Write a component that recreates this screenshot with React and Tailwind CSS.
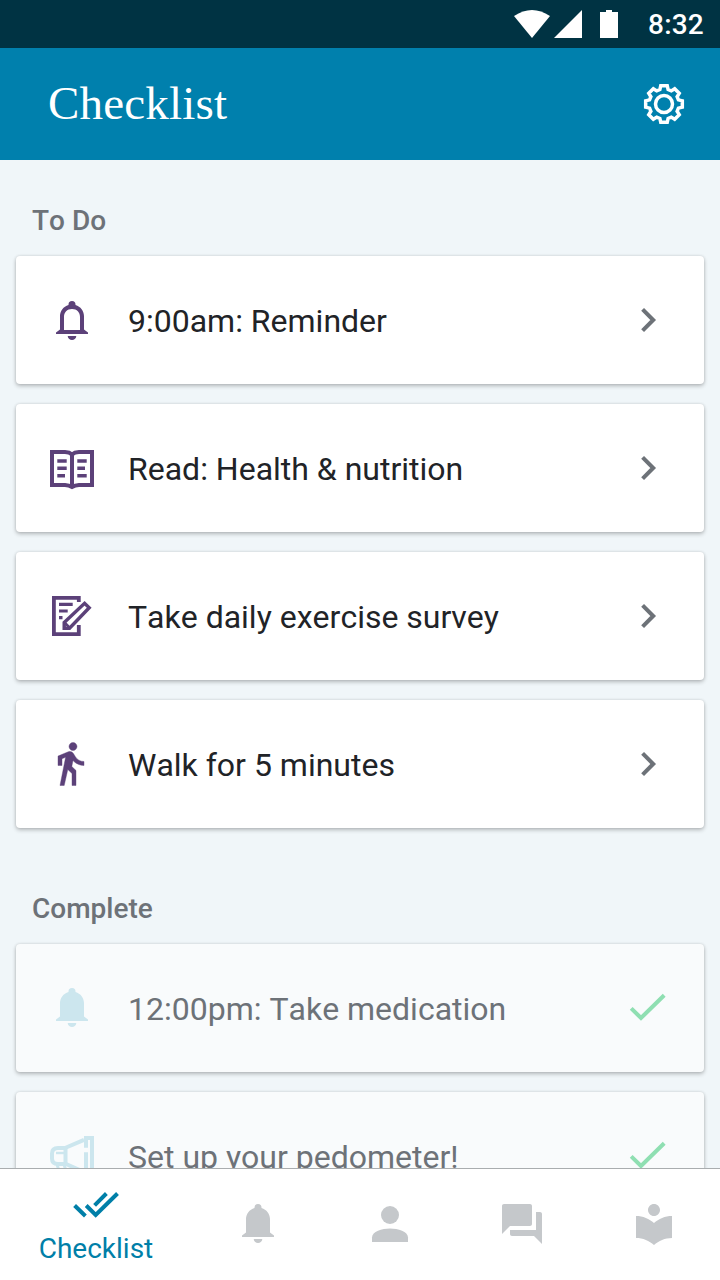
import React from "react";

const BELL_BODY =
  "M24 5a3.5 3.5 0 0 0-3.5 3.5v.5C15.400 10.500 12 15 12 20V33.500L8 36.500V38H40V36.500L36 33.500V20C36 15 32.600 10.500 27.500 9V8.500A3.500 3.500 0 0 0 24 5Z";

function Icon({ children, className = "" }) {
  return (
    <svg viewBox="0 0 48 48" fill="currentColor" className={"size-12 shrink-0 " + className}>
      {children}
    </svg>
  );
}

function BellOutline() {
  return (
    <Icon>
      <path
        fillRule="evenodd"
        d={BELL_BODY + "M24 13C19 13 16 16.500 16 21V34H32V21C32 16.500 29 13 24 13Z"}
      />
      <path d="M19.700 40h8.600a4.300 4 0 0 1-8.600 0Z" />
    </Icon>
  );
}

function BellSolid({ className }) {
  return (
    <Icon className={className}>
      <path d={BELL_BODY} />
      <path d="M19.700 40h8.600a4.300 4 0 0 1-8.600 0Z" />
    </Icon>
  );
}

function BookIcon() {
  return (
    <Icon>
      <g fill="none" stroke="currentColor" strokeWidth="4">
        <path d="M4 8H17Q21.500 8.200 24 10.500Q26.500 8.200 31 8H44V41H31Q27 41.200 24 43Q21 41.200 17 41H4Z" />
        <path d="M24 10V43" />
        <path strokeWidth="3.600" d="M9.300 17h9.400M9.300 24.300h9.400M9.300 31.700h7.700M29.300 17h9.400M29.300 24.300h7.700M29.300 31.700h9.400" />
      </g>
    </Icon>
  );
}

function SurveyIcon() {
  return (
    <Icon>
      <g fill="none" stroke="currentColor" strokeWidth="3.800">
        <path d="M30.800 10V5.900H5.900V42.100H30.800V33" />
        <path strokeWidth="3.200" d="M11 12.300h13.700M11 19h8.700M11 25.700h3.500" />
        <path strokeWidth="3.400" d="M16.200 36.200V30.500L36.600 11.300L41.200 15.800L21.500 36.200Z" />
        <path strokeWidth="2.600" d="M16.500 30.500L21.800 35.800" />
      </g>
    </Icon>
  );
}

function WalkIcon() {
  return (
    <Icon>
      <path
        stroke="currentColor"
        strokeWidth=".2"
        transform="translate(-2 -.5) scale(2)"
        d="M13.500 5.500c1.100 0 2-.9 2-2s-.9-2-2-2-2 .9-2 2 .9 2 2 2zM9.800 8.900L7 23h2.100l1.800-8 2.100 2v6h2v-7.500l-2.100-2 .6-3C14.800 12 16.800 13 19 13v-2c-1.900 0-3.500-1-4.300-2.400l-1-1.600c-.4-.6-1-1-1.700-1-.3 0-.5.1-.8.1L6 8.300V13h2V9.600l1.800-.7"
      />
    </Icon>
  );
}

function MegaphoneIcon() {
  return (
    <Icon>
      <g fill="none" stroke="currentColor" strokeWidth="4">
        <path d="M17.500 16H10Q4 16 4 21.500V26.500Q4 32 10 32H17.500Z" />
        <path d="M17 16L36 7.800M17 31.500L36 40" />
        <path d="M36 6H44V42H36" />
        <path d="M38 6V15.700M38 20.300V42" />
        <path strokeWidth="2.400" d="M8 21h9" />
        <path strokeWidth="3" d="M9 32L12 43H19L16 32" />
      </g>
    </Icon>
  );
}

function Chevron() {
  return (
    <Icon className="text-[#6d7278]">
      <path fill="none" stroke="currentColor" strokeWidth="4" d="M18.600 13.400L29.200 24L18.600 34.600" />
    </Icon>
  );
}

function Check() {
  return (
    <Icon className="text-[#8fdfb2]">
      <path fill="none" stroke="currentColor" strokeWidth="4" d="M7.200 24.300L17 34L40.200 11.300" />
    </Icon>
  );
}

const polar = (radius, degrees) => {
  const a = (degrees * Math.PI) / 180;
  return (24 + radius * Math.sin(a)).toFixed(2) + "," + (24 - radius * Math.cos(a)).toFixed(2);
};

const GEAR_POINTS = Array.from({ length: 8 }, (_, i) => {
  const a = i * 45;
  return [polar(18.6, a - 10), polar(18.6, a + 10), polar(15, a + 16), polar(15, a + 29)].join(" ");
}).join(" ");

function Gear() {
  return (
    <Icon>
      <g fill="none" stroke="currentColor" strokeWidth="3.500">
        <polygon points={GEAR_POINTS} />
        <circle cx="24" cy="24" r="8.500" />
      </g>
    </Icon>
  );
}

function Card({ icon, label, done }) {
  return (
    <li
      className={
        "flex h-32 shrink-0 items-center rounded-[4px] px-8 shadow-[0_2px_4px_rgba(0,0,0,0.24),0_0_3px_rgba(0,0,0,0.12)] " +
        (done ? "bg-[#f9fbfc] text-[#6d7278]" : "bg-white text-[#212327]")
      }
    >
      <span className={done ? "text-[#cce6ee]" : "text-[#5c4179]"}>{icon}</span>
      <span className="ml-8 flex-1 pt-0.5 text-[32px] leading-10 whitespace-nowrap">{label}</span>
      {done ? <Check /> : <Chevron />}
    </li>
  );
}

function Section({ title, children }) {
  return (
    <section>
      <h2 className="mb-[15px] pt-px pl-4 text-[28px] leading-10 font-medium text-[#6d7278]">{title}</h2>
      <ul className="flex flex-col gap-5">{children}</ul>
    </section>
  );
}

export default function App() {
  return (
    <div className="flex h-[1280px] w-[720px] flex-col overflow-hidden bg-[#f0f6f9] font-['Roboto',sans-serif] [font-kerning:none]">
      <div className="flex h-12 shrink-0 items-center justify-end bg-[#003343] pr-4 text-white">
        <svg viewBox="0 0 104 28" className="h-7 w-[104px]" fill="currentColor">
          <path d="M0 6Q18-6 36 6L18 28Z" />
          <path d="M68 0V28H40Z" />
          <path d="M92 0h6v2h6v26h-18V2h6Z" />
        </svg>
        <span className="ml-[30px] pt-0.5 text-[28px] leading-8 font-medium tracking-[0.2px]">8:32</span>
      </div>
      <header className="flex h-28 shrink-0 items-center justify-between bg-[#0080ad] pr-8 pl-12 text-white">
        <h1 className="pb-0.5 font-['Liberation_Serif',serif] text-[47px] leading-[56px] tracking-[0.2px]">Checklist</h1>
        <Gear />
      </header>
      <main className="flex min-h-0 flex-1 flex-col gap-[60px] overflow-hidden px-4 pt-10">
        <Section title="To Do">
          <Card icon={<BellOutline />} label="9:00am: Reminder" />
          <Card icon={<BookIcon />} label="Read: Health & nutrition" />
          <Card icon={<SurveyIcon />} label="Take daily exercise survey" />
          <Card icon={<WalkIcon />} label="Walk for 5 minutes" />
        </Section>
        <Section title="Complete">
          <Card done icon={<BellSolid className="mb-0.5" />} label="12:00pm: Take medication" />
          <Card done icon={<MegaphoneIcon />} label="Set up your pedometer!" />
        </Section>
      </main>
      <nav className="flex h-28 shrink-0 border-t border-[#a9adaf] bg-white text-[#c5c8cb]">
        <a className="flex w-48 flex-col items-center pt-[15px] text-[#007fa8]">
          <Icon>
            <g fill="none" stroke="currentColor" strokeWidth="4">
              <path d="M2.600 21.500L13.400 32M14.200 21.500L23.700 31L45.500 9.500M22.600 21.300L34.400 9.500" />
            </g>
          </Icon>
          <span className="pt-px text-[28px] leading-8">Checklist</span>
        </a>
        <a className="flex flex-1 justify-center pt-[30px]">
          <BellSolid />
        </a>
        <a className="flex flex-1 justify-center pt-[31px]">
          <Icon>
            <circle cx="24" cy="15" r="9" />
            <path d="M6 42V37.500C6 31.500 16 28.500 24 28.500S42 31.500 42 37.500V42Z" />
          </Icon>
        </a>
        <a className="flex flex-1 justify-center pt-[31px]">
          <Icon>
            <path
              transform="scale(2)"
              d="M21 6h-2v9H6v2c0 .55.450 1 1 1h11l4 4V7c0-.55-.45-1-1-1zm-4 6V3c0-.55-.45-1-1-1H3c-.55 0-1 .45-1 1v14l4-4h10c.55 0 1-.45 1-1z"
            />
          </Icon>
        </a>
        <a className="flex flex-1 justify-center pt-[31px]">
          <Icon>
            <path
              transform="scale(2)"
              d="M12 11.550C9.640 9.350 6.480 8 3 8v11c3.480 0 6.640 1.350 9 3.550 2.360-2.190 5.520-3.550 9-3.550V8c-3.480 0-6.640 1.350-9 3.550zM12 8c1.660 0 3-1.340 3-3s-1.340-3-3-3-3 1.340-3 3 1.340 3 3 3z"
            />
          </Icon>
        </a>
      </nav>
    </div>
  );
}
